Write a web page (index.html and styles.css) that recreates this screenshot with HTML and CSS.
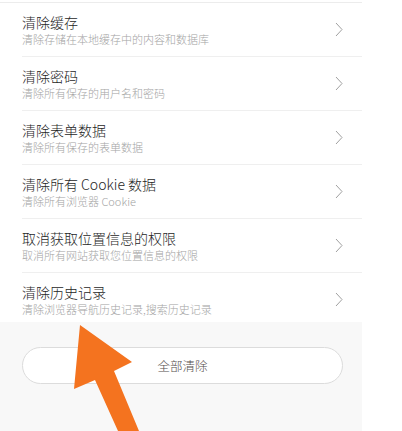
FILE: index.html
```html
<!DOCTYPE html>
<html lang="zh-CN">
<head>
    <meta charset="UTF-8">
    <meta name="viewport" content="width=device-width, initial-scale=1.0">
    <title>清除数据</title>
    <link rel="stylesheet" href="styles.css">
</head>
<body>

    <div class="panel">
        <ul class="list">
            <li class="row">
                <div class="text">
                    <div class="title">清除缓存</div>
                    <div class="desc">清除存储在本地缓存中的内容和数据库</div>
                </div>
                <svg class="chevron" width="8" height="15" viewBox="0 0 8 15"><polyline points="1,1 7,7.5 1,14" fill="none" stroke="#a0a0a0" stroke-width="1"/></svg>
            </li>
            <li class="row">
                <div class="text">
                    <div class="title">清除密码</div>
                    <div class="desc">清除所有保存的用户名和密码</div>
                </div>
                <svg class="chevron" width="8" height="15" viewBox="0 0 8 15"><polyline points="1,1 7,7.5 1,14" fill="none" stroke="#a0a0a0" stroke-width="1"/></svg>
            </li>
            <li class="row">
                <div class="text">
                    <div class="title">清除表单数据</div>
                    <div class="desc">清除所有保存的表单数据</div>
                </div>
                <svg class="chevron" width="8" height="15" viewBox="0 0 8 15"><polyline points="1,1 7,7.5 1,14" fill="none" stroke="#a0a0a0" stroke-width="1"/></svg>
            </li>
            <li class="row">
                <div class="text">
                    <div class="title">清除所有 Cookie 数据</div>
                    <div class="desc">清除所有浏览器 Cookie</div>
                </div>
                <svg class="chevron" width="8" height="15" viewBox="0 0 8 15"><polyline points="1,1 7,7.5 1,14" fill="none" stroke="#a0a0a0" stroke-width="1"/></svg>
            </li>
            <li class="row">
                <div class="text">
                    <div class="title">取消获取位置信息的权限</div>
                    <div class="desc">取消所有网站获取您位置信息的权限</div>
                </div>
                <svg class="chevron" width="8" height="15" viewBox="0 0 8 15"><polyline points="1,1 7,7.5 1,14" fill="none" stroke="#a0a0a0" stroke-width="1"/></svg>
            </li>
            <li class="row last">
                <div class="text">
                    <div class="title">清除历史记录</div>
                    <div class="desc">清除浏览器导航历史记录,搜索历史记录</div>
                </div>
                <svg class="chevron" width="8" height="15" viewBox="0 0 8 15"><polyline points="1,1 7,7.5 1,14" fill="none" stroke="#a0a0a0" stroke-width="1"/></svg>
            </li>
        </ul>

        <div class="footer">
            <button class="clear-all">全部清除</button>
        </div>
    </div>

    <!-- annotation arrow -->
    <svg class="arrow" width="402" height="431" viewBox="0 0 402 431">
        <polygon points="80,325 132,362 114,371 139,431 118,431 95,380 74,389" fill="#f4731f"/>
    </svg>

</body>
</html>
```

FILE: styles.css
```css
body {
    margin: 0;
    padding: 0;
    background: #fff;
    font-family: "Noto Sans CJK SC", "Noto Sans", sans-serif;
    width: 402px;
    height: 431px;
    overflow: hidden;
    position: relative;
}

.panel {
    width: 362px;
    height: 431px;
    display: flex;
    flex-direction: column;
}

.list {
    list-style: none;
    margin: 0;
    margin-top: 2px;
    padding: 0;
    border-top: 1px solid #ececec;
}

.row {
    display: flex;
    align-items: center;
    margin-left: 22px;
    padding: 10px 19px 10px 0;
    border-bottom: 1px solid #efefef;
    height: 33px;
}

.row.last {
    border-bottom: none;
    padding-bottom: 6px;
}

.text {
    flex: 1;
}

.title {
    font-size: 14px;
    font-weight: 300;
    line-height: 18px;
    color: #1e1e1e;
}

.desc {
    margin-top: 1px;
    font-size: 11px;
    font-weight: 300;
    line-height: 14px;
    color: #a4a4a4;
}

.chevron {
    display: block;
}

.footer {
    flex: 1;
    background: #f8f8f8;
    padding: 25px 19px 0 22px;
}

.clear-all {
    width: 100%;
    height: 37px;
    border: 1px solid #dcdcdc;
    border-radius: 19px;
    background: #fff;
    font-family: "Noto Sans CJK SC", sans-serif;
    font-weight: 300;
    font-size: 12.5px;
    color: #554e4e;
    cursor: pointer;
}

.arrow {
    position: absolute;
    left: 0;
    top: 0;
    pointer-events: none;
}
```
